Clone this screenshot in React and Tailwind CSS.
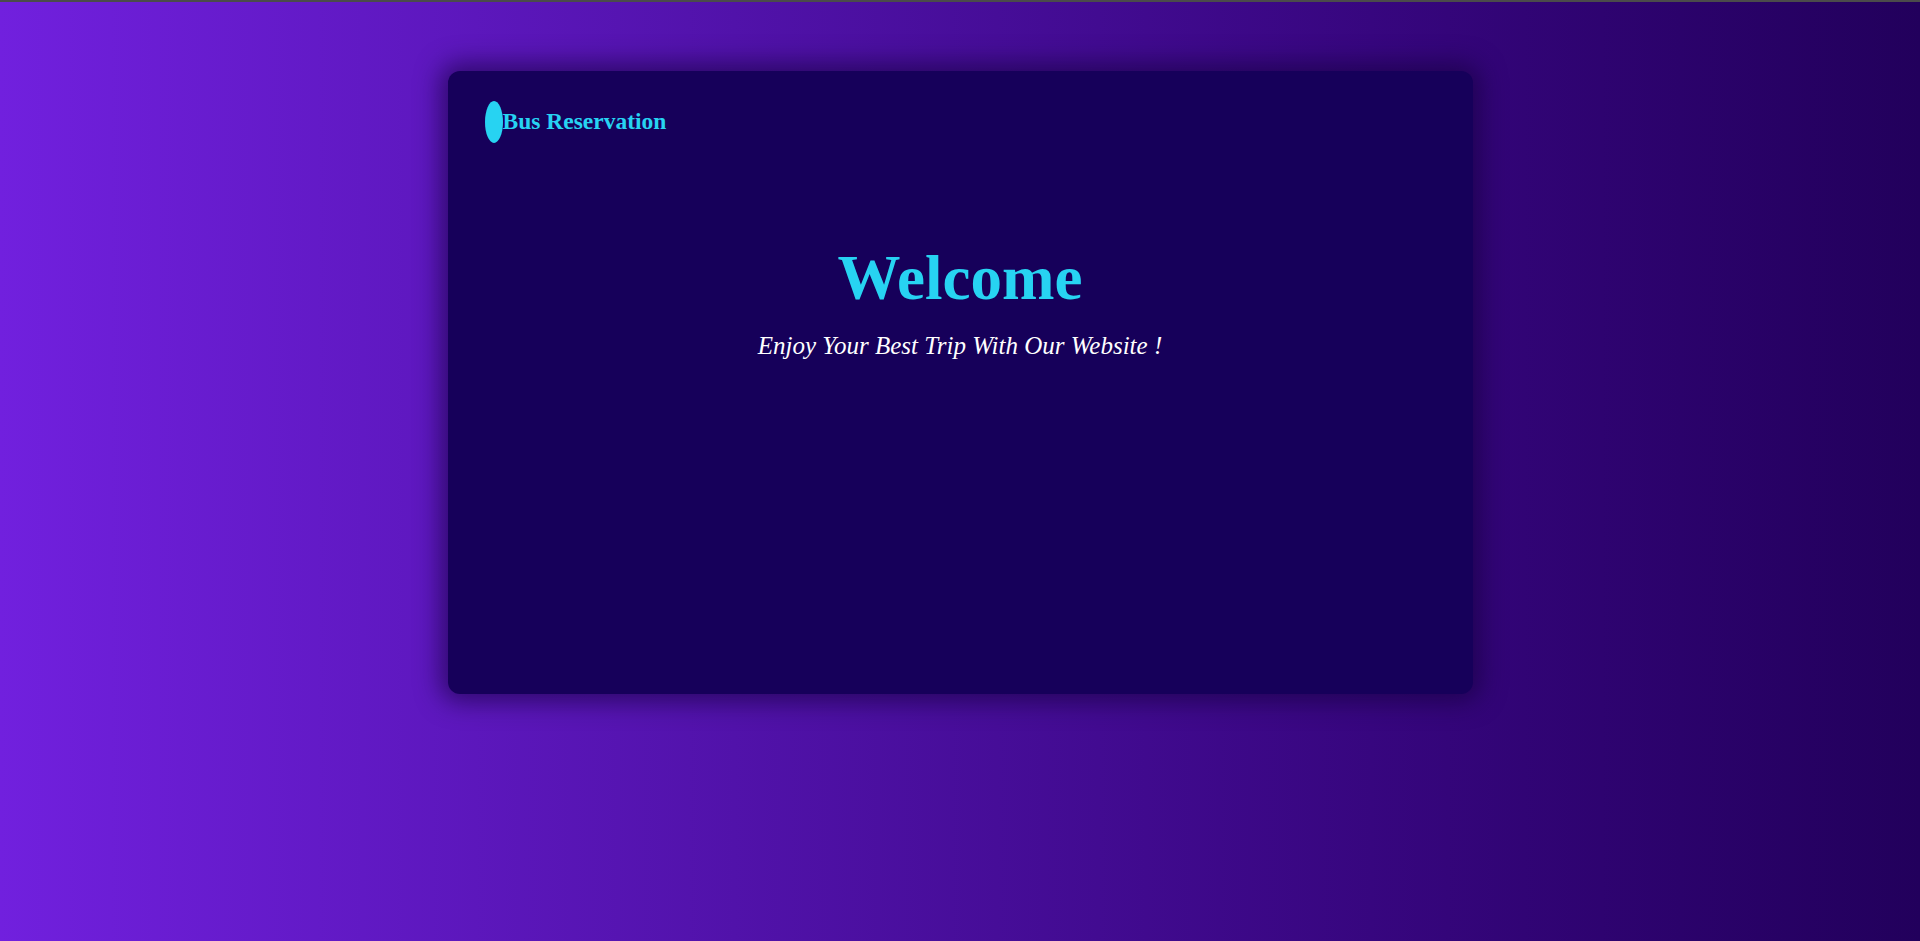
import React from 'react';

export default function App() {
  return (
    <div className="min-h-[941px] w-full border-t-2 border-[#4b4b4b] bg-linear-to-r from-[#7120de] to-[#22005c] font-['Liberation_Serif',serif]">
      <div className="flex justify-center pt-[69px]">
        <div className="w-[1025px] h-[623px] rounded-xl bg-[#16005a] shadow-[0_0_24px_8px_rgba(20,0,60,0.6)] px-[37px] pt-[30px]">
          <div className="flex items-center">
            <div className="w-[18px] h-[42px] rounded-[50%] bg-[#27d3f2]"></div>
            <span className="text-[#27d3f2] text-[23.5px] font-bold">Bus Reservation</span>
          </div>
          <div className="flex flex-col items-center mt-[104px]">
            <h1 className="text-[#27d3f2] text-[63px] font-bold leading-none">Welcome</h1>
            <p className="text-white text-[25px] italic mt-[17px]">Enjoy Your Best Trip With Our Website !</p>
          </div>
        </div>
      </div>
    </div>
  );
}
